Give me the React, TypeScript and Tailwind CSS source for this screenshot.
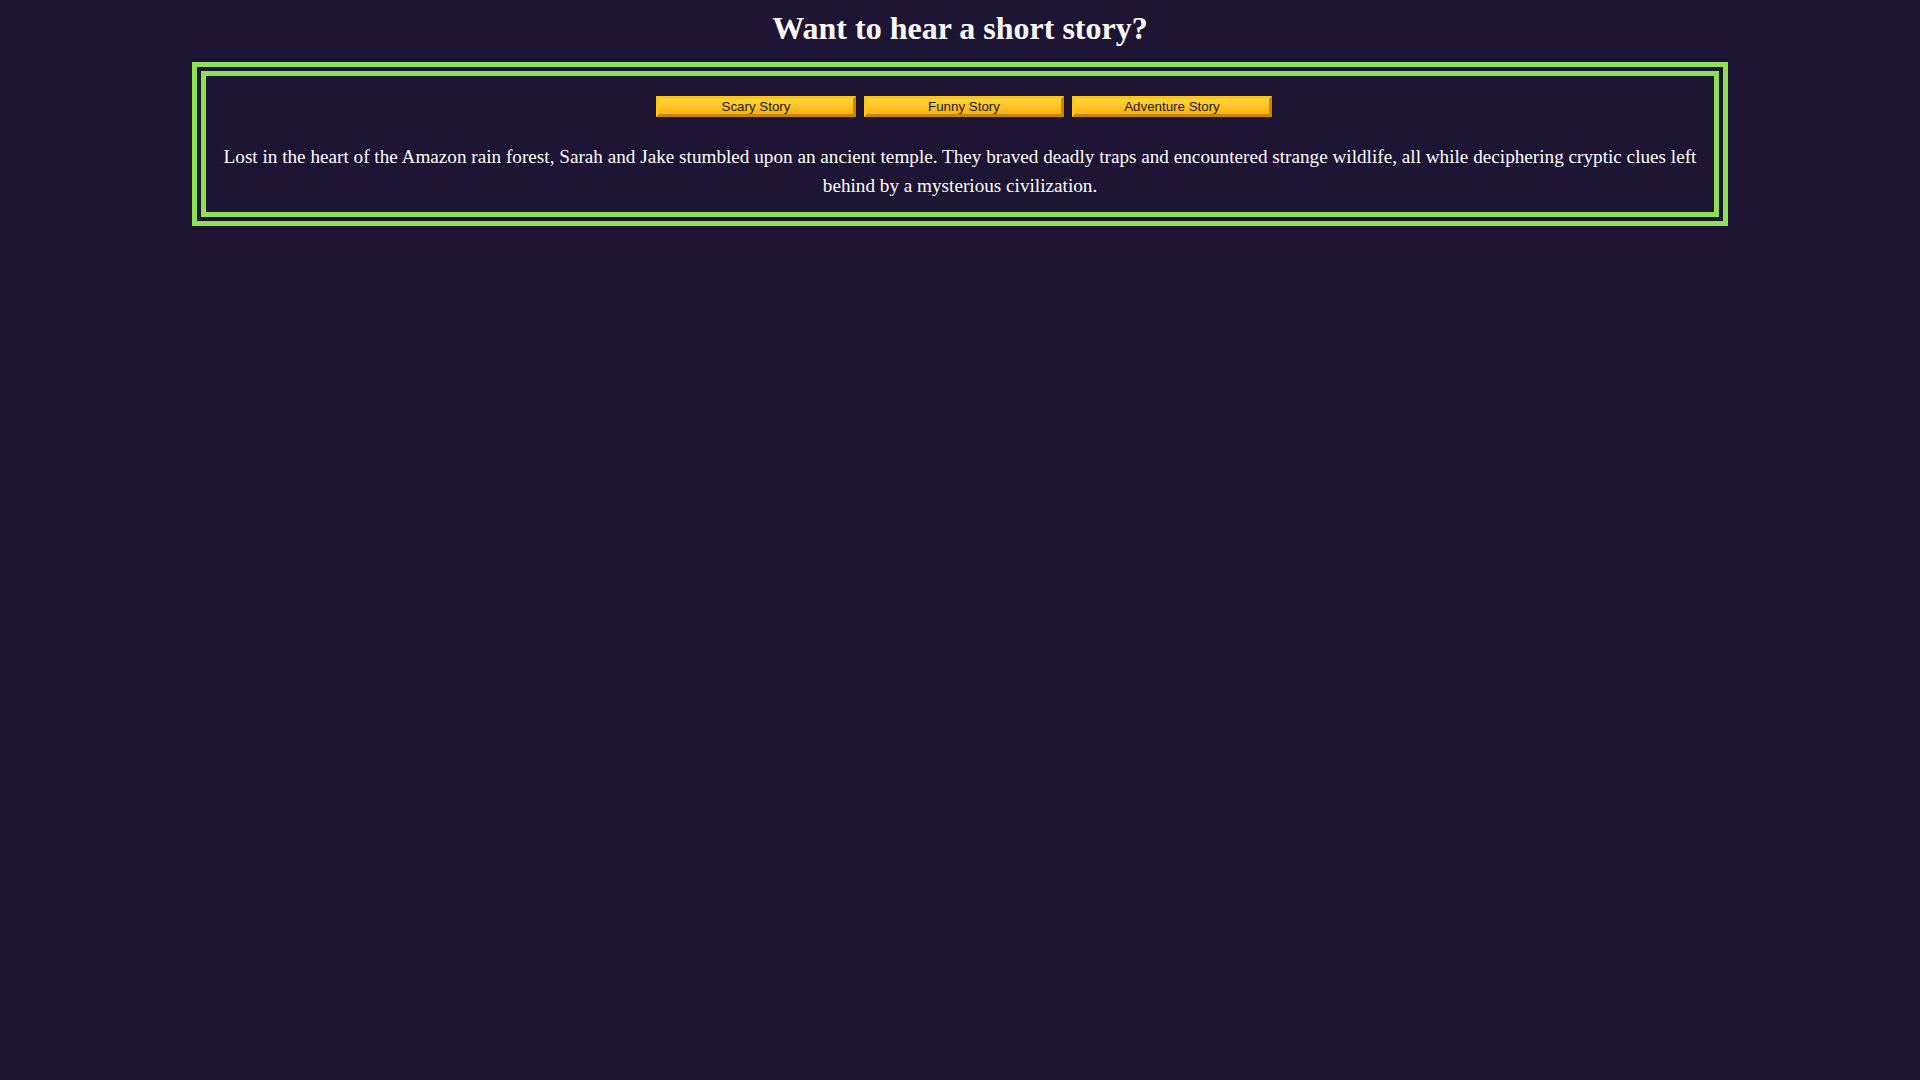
export default function App() {
  const stories = ["Scary Story", "Funny Story", "Adventure Story"];
  return (
    <div className="min-h-screen w-full bg-[#1e1433] pt-[10px] font-['Liberation_Serif',serif] text-white">
      <h1 className="mb-[16px] text-center text-[32px] font-bold leading-[36px]">
        Want to hear a short story?
      </h1>

      {/* Story box */}
      <div className="mx-auto w-[80%] border-[14px] border-double border-[#8fe052] px-[10px] pb-[11px] pt-[20px]">
        <div className="flex justify-center gap-[8px] pl-[8px]">
          {stories.map((s) => (
            <button
              key={s}
              className="h-[21px] w-[200px] border-[3px] border-b-[#c48600] border-l-[#ffc61a] border-r-[#c48600] border-t-[#ffc61a] bg-gradient-to-b from-[#ffd63d] to-[#ffb000] font-['Liberation_Sans',sans-serif] text-[13.33px] leading-none text-[#1a1a1a]"
            >
              {s}
            </button>
          ))}
        </div>
        <p className="mt-[25px] text-center text-[19.2px] leading-[29.4px]">
          Lost in the heart of the Amazon rain forest, Sarah and Jake stumbled upon an ancient
          temple. They braved deadly traps and encountered strange wildlife, all while
          deciphering cryptic clues left behind by a mysterious civilization.
        </p>
      </div>
    </div>
  );
}
